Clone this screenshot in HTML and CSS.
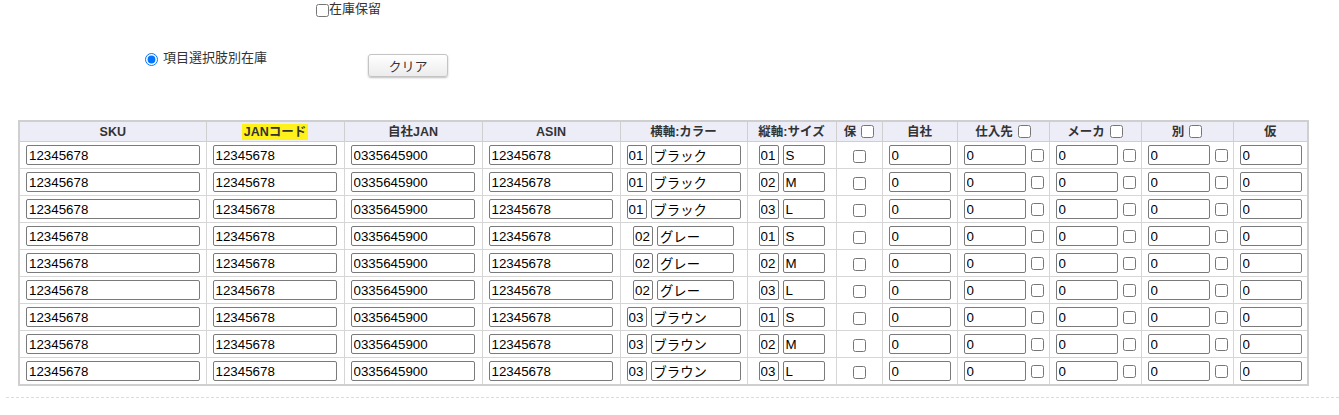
FILE: index.html
```html
<!DOCTYPE html>
<html lang="ja">
<head>
    <meta charset="UTF-8">
    <title>在庫設定</title>
    <link rel="stylesheet" href="styles.css">
</head>
<body>
    <div class="page">
        <!-- 上部オプション -->
        <div class="stock-hold">
            <label><input type="checkbox" class="hold-check">在庫保留</label>
        </div>
        <div class="choice-row">
            <label class="choice-label"><input type="radio" name="mode" checked>項目選択肢別在庫</label>
            <button type="button" class="btn-clear">クリア</button>
        </div>

        <!-- 在庫テーブル -->
        <table class="stock-table">
            <colgroup>
                <col style="width:187px"><col style="width:138px"><col style="width:138px"><col style="width:138px">
                <col style="width:127px"><col style="width:89px"><col style="width:46px"><col style="width:75px">
                <col style="width:92px"><col style="width:92px"><col style="width:92px"><col style="width:75px">
            </colgroup>
            <thead>
                <tr>
                    <th>SKU</th>
                    <th><span class="mark">JANコード</span></th>
                    <th>自社JAN</th>
                    <th>ASIN</th>
                    <th>横軸:カラー</th>
                    <th>縦軸:サイズ</th>
                    <th>保<input type="checkbox" class="head-check"></th>
                    <th>自社</th>
                    <th>仕入先<input type="checkbox" class="head-check"></th>
                    <th>メーカ<input type="checkbox" class="head-check"></th>
                    <th>別<input type="checkbox" class="head-check"></th>
                    <th>仮</th>
                </tr>
            </thead>
            <tbody id="rows"></tbody>
        </table>

        <div class="divider"></div>
    </div>

    <script>
        // 行データ
        var colors = [['01', 'ブラック', 'name-long'], ['02', 'グレー', 'name-short'], ['03', 'ブラウン', 'name-long']];
        var sizes = [['01', 'S'], ['02', 'M'], ['03', 'L']];
        var html = '';
        colors.forEach(function(c) {
            sizes.forEach(function(s) {
                html += '<tr>' +
                    '<td><input class="txt w-sku" value="12345678"></td>' +
                    '<td><input class="txt w-jan" value="12345678"></td>' +
                    '<td><input class="txt w-jan" value="0335645900"></td>' +
                    '<td><input class="txt w-jan" value="12345678"></td>' +
                    '<td class="center"><input class="txt code" value="' + c[0] + '"><input class="txt ' + c[2] + '" value="' + c[1] + '"></td>' +
                    '<td class="center"><input class="txt code" value="' + s[0] + '"><input class="txt size" value="' + s[1] + '"></td>' +
                    '<td class="center"><input type="checkbox" class="cell-check"></td>' +
                    '<td><input class="txt num" value="0"></td>' +
                    '<td><input class="txt num" value="0"><input type="checkbox" class="side-check"></td>' +
                    '<td><input class="txt num" value="0"><input type="checkbox" class="side-check"></td>' +
                    '<td><input class="txt num" value="0"><input type="checkbox" class="side-check"></td>' +
                    '<td><input class="txt num" value="0"></td>' +
                    '</tr>';
            });
        });
        document.getElementById('rows').innerHTML = html;
    </script>
</body>
</html>
```

FILE: styles.css
```css
body {
    margin: 0;
    font-family: "Liberation Sans", "Noto Sans CJK JP", sans-serif;
    font-size: 13px;
    color: #333;
    background-color: #fff;
}

/* 上部オプション */
.stock-hold {
    padding: 1px 0 0 312px;
    height: 18px;
    line-height: 16px;
}

.hold-check {
    margin: 3px 0 3px 4px;
    vertical-align: top;
}

.choice-row {
    display: flex;
    align-items: flex-start;
    margin-top: 32px;
    padding-left: 141px;
}

.choice-label {
    width: 227px;
    line-height: 14px;
}

.choice-label input {
    margin: 2px 5px 0 4px;
    vertical-align: top;
}

.btn-clear {
    margin-top: 3px;
    width: 80px;
    height: 23px;
    font-family: "Liberation Sans", "Noto Sans CJK JP", sans-serif;
    font-size: 13px;
    color: #333;
    background: linear-gradient(#ffffff, #ececec);
    border: 1px solid #c4c4c4;
    border-radius: 3px;
    box-shadow: 0 1px 2px rgba(0, 0, 0, 0.25);
    cursor: pointer;
}

/* 在庫テーブル */
.stock-table {
    margin: 43px 0 0 18px;
    border-collapse: collapse;
    table-layout: fixed;
    width: 1289px;
    border: 2px solid #cfcfcf;
}

.stock-table th {
    background-color: #ededf8;
    border: 1px solid #cfcfcf;
    font-size: 12.5px;
    font-weight: bold;
    color: #333;
    height: 18px;
    line-height: 16px;
    padding: 1px 0 0;
    text-align: center;
    white-space: nowrap;
}

.mark {
    background-color: #fff21a;
    padding: 1px 2px;
}

.head-check {
    margin: 0 0 0 5px;
    vertical-align: -2px;
}

.stock-table td {
    border: 1px solid #d6d6d6;
    padding: 3px 6px;
    height: 20px;
    white-space: nowrap;
}

.stock-table td.center {
    text-align: center;
}

.txt {
    box-sizing: border-box;
    height: 20px;
    border: 1px solid #7a7a7a;
    border-radius: 2px;
    padding: 1px 2px;
    font-family: "Liberation Sans", "Noto Sans CJK JP", sans-serif;
    font-size: 13.33px;
    color: #000;
    vertical-align: middle;
    margin: 0;
}

.w-sku { width: 174px; }
.w-jan { width: 124px; }
.code { width: 20px; padding: 1px 1px; margin-right: 4px; }
.name-long { width: 90px; }
.name-short { width: 77px; }
.size { width: 42px; }
.num { width: 62px; }

.cell-check {
    margin: 0;
    vertical-align: middle;
}

.side-check {
    margin: 0 0 0 5px;
    vertical-align: middle;
}

.divider {
    margin: 11px 0 0 6px;
    border-top: 1px dashed #dcdcdc;
}
```
